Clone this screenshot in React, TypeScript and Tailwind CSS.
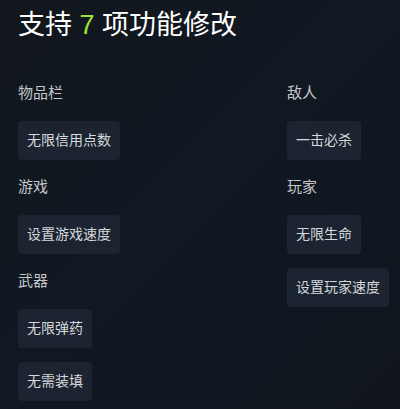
export default function App() {
  const left = [
    { title: '物品栏', items: ['无限信用点数'] },
    { title: '游戏', items: ['设置游戏速度'] },
    { title: '武器', items: ['无限弹药', '无需装填'] },
  ];
  const right = [
    { title: '敌人', items: ['一击必杀'] },
    { title: '玩家', items: ['无限生命', '设置玩家速度'] },
  ];

  const Column = ({ sections, className }: { sections: typeof left; className?: string }) => (
    <div className={`flex flex-col gap-[16px] shrink-0 ${className ?? ''}`}>
      {sections.map((s) => (
        <div key={s.title} className="flex flex-col">
          <div className="text-[15px] leading-[22px] text-[#c4c7cb] mb-[17px]">{s.title}</div>
          <div className="flex flex-col items-start gap-[14px]">
            {s.items.map((it) => (
              <div
                key={it}
                className="h-[39px] px-[9px] flex items-center whitespace-nowrap rounded-[4px] bg-[#1b2430] text-[14px] text-[#d5d8dc]"
              >
                {it}
              </div>
            ))}
          </div>
        </div>
      ))}
    </div>
  );

  return (
    <div
      className="w-[400px] h-[409px] overflow-hidden bg-gradient-to-br from-[#12171d] via-[#111822] to-[#10151d] pl-[18px] pt-[8px]"
      style={{ fontFamily: '"Liberation Sans", "Noto Sans CJK SC", sans-serif' }}
    >
      <h1 className="text-[27px] leading-[34px] text-white font-normal whitespace-nowrap">
        支持 <span className="text-[#9ee03a]">7</span> 项功能修改
      </h1>
      <div className="flex mt-[40px]">
        <Column sections={left} className="w-[269px]" />
        <Column sections={right} />
      </div>
    </div>
  );
}
